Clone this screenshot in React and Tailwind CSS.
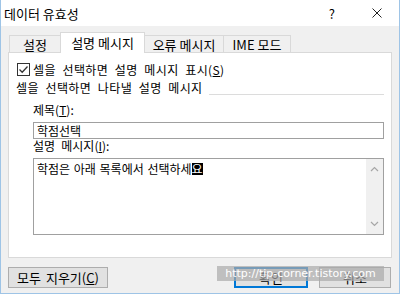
import React from "react";

const KR = { fontFamily: '"Noto Sans CJK KR", "Noto Sans", sans-serif' };

function Chevron({ up }) {
  return (
    <svg width="9" height="6" viewBox="0 0 9 6" className="block">
      <path
        d={up ? "M1 5 L4.5 1.5 L8 5" : "M1 1 L4.5 4.5 L8 1"}
        fill="none"
        stroke="#a6a6a6"
        strokeWidth="1.2"
      />
    </svg>
  );
}

export default function App() {
  return (
    <div
      className="relative flex h-[294px] w-[400px] flex-col overflow-hidden border-x border-b border-[#9ec4e6] bg-[#f0f0f0] text-[12px] leading-none text-black"
      style={KR}
    >
      {/* title bar */}
      <div className="flex h-[26px] shrink-0 items-center bg-white pl-[3px]">
        <span className="text-[13px]">데이터 유효성</span>
        <span className="ml-auto mr-[37px] text-[13px]">?</span>
        <svg width="10" height="10" viewBox="0 0 10 10" className="mr-[17px]">
          <path d="M0.5 0.5 L9.5 9.5 M9.5 0.5 L0.5 9.5" stroke="#222" strokeWidth="1" />
        </svg>
      </div>

      <div className="flex flex-1 flex-col px-[7px] pt-[6px]">
        {/* tabs */}
        <div className="flex h-[20px] items-end pl-[1px]">
          <div className="flex items-end">
            <div className="flex h-[17px] w-[52px] items-center justify-center border border-b-0 border-[#d9d9d9] text-[13px]">
              설정
            </div>
            <div className="relative z-10 -mb-px -ml-px flex h-[21px] w-[85px] items-center justify-center border border-b-0 border-[#d9d9d9] bg-white pb-[1px] text-[13px]">
              설명 메시지
            </div>
            <div className="-ml-px flex h-[17px] w-[80px] items-center justify-center border border-b-0 border-[#d9d9d9] text-[13px]">
              오류 메시지
            </div>
            <div className="-ml-px flex h-[17px] w-[68px] items-center justify-center border border-b-0 border-[#d9d9d9] text-[13px]">
              IME 모드
            </div>
          </div>
        </div>

        {/* panel */}
        <div className="flex h-[206px] flex-col border border-[#d9d9d9] bg-white pl-[8px] pr-[7px] [word-spacing:3.5px]">
          <div className="mt-[10px] flex h-[13px] items-center">
            <div className="flex h-[13px] w-[13px] shrink-0 items-center justify-center border border-[#333]">
              <svg width="11" height="11" viewBox="0 0 11 11">
                <path d="M1.5 5.5 L4.2 8.2 L9.5 2.5" fill="none" stroke="#333" strokeWidth="1.3" />
              </svg>
            </div>
            <span className="ml-[3px] tracking-[0.4px]">
              셀을 선택하면 설명 메시지 표시(<span className="underline">S</span>)
            </span>
          </div>

          <div className="mt-[5px] flex h-[14px] items-end">
            <span className="-ml-px self-center tracking-[0.4px]">셀을 선택하면 나타낼 설명 메시지</span>
            <div className="ml-[6px] h-px flex-1 bg-[#dcdcdc]" />
          </div>

          <div className="ml-[16px] flex flex-col">
            <div className="mt-[9px] flex h-[12px] items-center">
              제목(<span className="underline">T</span>):
            </div>
            <div className="mt-[6px] flex h-[17px] items-center border border-[#a0a0a0] pl-[3px]">
              학점선택
            </div>
            <div className="mt-px flex h-[12px] items-center">
              설명 메시지(<span className="underline">I</span>):
            </div>
            <div className="mt-[6px] flex h-[77px] border border-[#a0a0a0]">
              <div className="flex-1 pl-[3px] pt-[3px] [word-spacing:1px]">
                <span className="inline-flex h-[13px] items-center whitespace-pre">
                  학점은 아래 목록에서 선택하세
                  <span className="bg-black text-white">요</span>
                </span>
              </div>
              <div className="flex w-[17px] flex-col items-center justify-between bg-[#f0f0f0] py-[7px]">
                <Chevron up />
                <Chevron />
              </div>
            </div>
          </div>
        </div>

        {/* buttons */}
        <div className="mt-[9px] flex pr-[1px]">
          <div className="flex h-[21px] w-[100px] items-center justify-center border border-[#adadad] bg-[#e1e1e1] text-[13px] [word-spacing:2px]">
            모두 지우기(<span className="underline">C</span>)
          </div>
          <div className="ml-auto flex h-[21px] w-[74px] items-center justify-center border-2 border-[#0078d7] bg-[#e1e1e1] text-[13px]">
            확인
          </div>
          <div className="ml-[11px] flex h-[21px] w-[72px] items-center justify-center border border-[#adadad] bg-[#e1e1e1] text-[13px]">
            취소
          </div>
        </div>
      </div>

      {/* watermark */}
      <div
        className="absolute left-[216px] top-[266px] flex h-[15px] w-[167px] items-center justify-center bg-[#a9a9a9]/70 text-[11px] text-white"
        style={{ fontFamily: '"DejaVu Sans", sans-serif' }}
      >
        http://tip-corner.tistory.com
      </div>
    </div>
  );
}
